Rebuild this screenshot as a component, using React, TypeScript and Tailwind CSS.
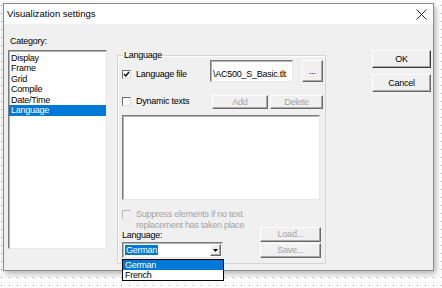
import React from "react";

const sunken =
  "border border-t-[#7a7a7a] border-l-[#7a7a7a] border-r-[#e8e8e8] border-b-[#e8e8e8] shadow-[inset_1px_1px_0_#b4b4b4]";
const raised =
  "border border-t-white border-l-white border-r-[#6a6a6a] border-b-[#6a6a6a] shadow-[inset_-1px_-1px_0_#a8a8a8] bg-[#f0f0f0]";

function Check({ checked = false, disabled = false }: { checked?: boolean; disabled?: boolean }) {
  return (
    <div
      className={
        "w-[9px] h-[9px] shrink-0 flex items-center justify-center border " +
        (disabled
          ? "bg-[#f0f0f0] border-t-[#b8b8b8] border-l-[#b8b8b8] border-r-[#e8e8e8] border-b-[#e8e8e8]"
          : "bg-white border-t-[#6a6a6a] border-l-[#6a6a6a] border-r-[#dadada] border-b-[#dadada]")
      }
    >
      {checked && (
        <svg width="7" height="7" viewBox="0 0 7 7">
          <path d="M1 3 L2.8 5 L6 1" fill="none" stroke="#000" strokeWidth="1.3" />
        </svg>
      )}
    </div>
  );
}

function Btn({ label, disabled = false, className = "" }: { label: string; disabled?: boolean; className?: string }) {
  return (
    <div
      className={
        raised +
        " flex items-center justify-center " +
        (disabled ? "text-[#a3a3a3] " : "text-black ") +
        className
      }
    >
      {label}
    </div>
  );
}

export default function App() {
  const items = ["Display", "Frame", "Grid", "Compile", "Date/Time", "Language"];
  return (
    <div
      className="w-[442px] h-[288px] overflow-hidden bg-white bg-[linear-gradient(to_right,#fff_7px,transparent_7px),linear-gradient(to_bottom,#fff_7px,#8c8c8c_7px)] bg-[length:8px_8px] bg-[position:2px_6px] pl-[3px] pt-[3px] font-['Liberation_Sans',Arial,sans-serif] text-[9px] leading-[10.5px] tracking-[-0.25px] text-black"
    >
      <div className="w-[431px] h-[268px] border border-[#8a8a8a] bg-[#f0f0f0] shadow-[2px_3px_6px_rgba(0,0,0,0.3)] flex flex-col">
        {/* title bar */}
        <div className="h-[20px] bg-white flex items-center pl-[3px] pr-[6px] pt-[1px] shrink-0">
          <span className="text-[9.5px] tracking-[0px]">Visualization settings</span>
          <svg className="ml-auto" width="11" height="11" viewBox="0 0 11 11">
            <path d="M0.5 0.5 L10.5 10.5 M10.5 0.5 L0.5 10.5" stroke="#222" strokeWidth="1" />
          </svg>
        </div>
        {/* body */}
        <div className="flex flex-1">
          {/* category */}
          <div className="ml-[4px] pt-[12px] w-[99px]">
            <div className="pl-[2px]">Category:</div>
            <div className={"mt-[3px] h-[199px] bg-white pt-[2px] " + sunken}>
              {items.map((t) => (
                <div
                  key={t}
                  className={
                    "h-[10.5px] pl-[2px] " + (t === "Language" ? "bg-[#0078d7] text-white" : "")
                  }
                >
                  {t}
                </div>
              ))}
            </div>
          </div>
          {/* group box */}
          <div className="relative ml-[10px] mt-[31px] w-[209px] h-[209px] border border-[#d5d5d5] shadow-[inset_1px_1px_0_#fff] pl-[4px]">
            <span className="absolute left-[5px] top-[-6px] px-[1px] bg-[#f0f0f0]">Language</span>
            {/* row 1 */}
            <div className="flex mt-[4px] h-[22px]">
              <div className="w-[88px] flex items-center gap-[5px] pt-[6px]">
                <Check checked />
                <span>Language file</span>
              </div>
              <div className={"w-[83px] h-[22px] bg-white overflow-hidden whitespace-nowrap pl-[2px] pt-[8px] " + sunken}>
                \AC500_S_Basic.tlt
              </div>
              <Btn label="..." className="ml-[9px] w-[21px] h-[22px]" />
            </div>
            {/* row 2 */}
            <div className="flex mt-[13px] h-[13px]">
              <div className="w-[90px] flex items-center gap-[5px]">
                <Check />
                <span>Dynamic texts</span>
              </div>
              <Btn label="Add" disabled className="w-[56px] h-[14px]" />
              <Btn label="Delete" disabled className="ml-[2px] w-[53px] h-[14px]" />
            </div>
            {/* white box */}
            <div className={"mt-[7px] w-[198px] h-[85px] bg-white " + sunken}></div>
            {/* suppress */}
            <div className="flex mt-[9px] gap-[5px] text-[#a3a3a3]">
              <div className="pt-[1px]">
                <Check disabled />
              </div>
              <div>
                <div>Suppress elements if no text</div>
                <div>replacement has taken place</div>
              </div>
            </div>
            {/* bottom */}
            <div className="flex mt-[-3px]">
              <div className="w-[101px]">
                <div className="mt-[3px]">Language:</div>
                <div className={"relative mt-[1.5px] h-[16px] bg-white flex items-center pl-[2px] " + sunken}>
                  <span className="bg-[#0078d7] text-white px-[1px] leading-[10px]">German</span>
                  <div className={"ml-auto mr-[1px] w-[11px] h-[12px] flex items-center justify-center " + raised}>
                    <svg width="5" height="3" viewBox="0 0 5 3">
                      <path d="M0 0 H5 L2.5 3 Z" fill="#000" />
                    </svg>
                  </div>
                  <div className="absolute left-[-1px] top-[16px] w-[102px] h-[22px] bg-white border border-black z-10">
                    <div className="h-[10px] bg-[#0078d7] text-white pl-[2px]">German</div>
                    <div className="h-[10px] pl-[2px]">French</div>
                  </div>
                </div>
              </div>
              <div className="ml-[37px] flex flex-col gap-[1px]">
                <Btn label="Load..." disabled className="w-[61px] h-[15px]" />
                <Btn label="Save..." disabled className="w-[61px] h-[15px]" />
              </div>
            </div>
          </div>
          {/* OK / Cancel */}
          <div className="ml-[46px] mt-[26px] flex flex-col gap-[6px]">
            <Btn label="OK" className="w-[59px] h-[18px] !border-r-[#3a3a3a] !border-b-[#3a3a3a]" />
            <Btn label="Cancel" className="w-[59px] h-[18px]" />
          </div>
        </div>
      </div>
    </div>
  );
}
